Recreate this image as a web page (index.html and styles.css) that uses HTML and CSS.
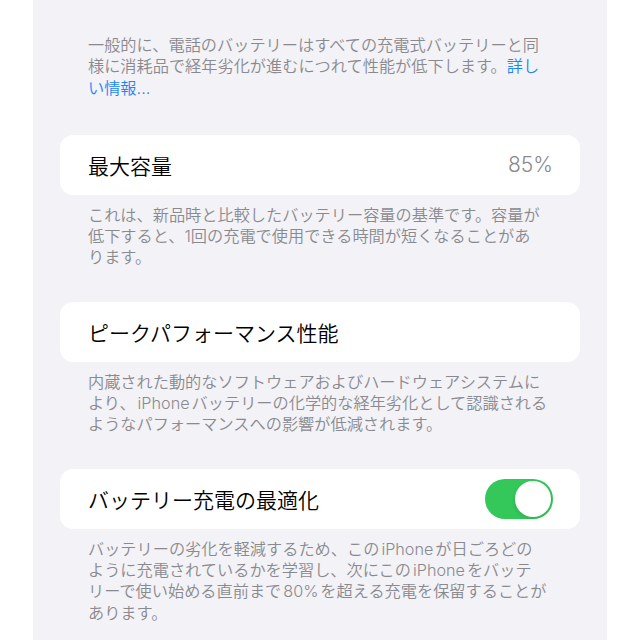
FILE: index.html
```html
<!DOCTYPE html>
<html lang="ja">
<head>
<meta charset="UTF-8" />
<meta name="viewport" content="width=device-width, initial-scale=1" />
<title>バッテリーの状態</title>
<link rel="stylesheet" href="styles.css">
</head>
<body>

<div class="panel">

  <p class="note note-top">
    一般的に、電話のバッテリーはすべての充電式バッテリーと同<br>様に消耗品で経年劣化が進むにつれて性能が低下します。<a href="#">詳し<br>い情報...</a>
  </p>

  <section class="group">
    <div class="card">
      <span class="card-title">最大容量</span>
      <span class="card-value">85%</span>
    </div>
    <p class="note">
      これは、新品時と比較したバッテリー容量の基準です。容量が<br>低下すると、1回の充電で使用できる時間が短くなることがあ<br>ります。
    </p>
  </section>

  <section class="group">
    <div class="card">
      <span class="card-title">ピークパフォーマンス性能</span>
    </div>
    <p class="note">
      内蔵された動的なソフトウェアおよびハードウェアシステムに<br>より、<span class="en">iPhone</span>バッテリーの化学的な経年劣化として認識される<br>ようなパフォーマンスへの影響が低減されます。
    </p>
  </section>

  <section class="group">
    <div class="card">
      <span class="card-title">バッテリー充電の最適化</span>
      <span class="toggle on" role="switch" aria-checked="true"><span class="knob"></span></span>
    </div>
    <p class="note">
      バッテリーの劣化を軽減するため、この<span class="en">iPhone</span>が日ごろどの<br>ように充電されているかを学習し、次にこの<span class="en">iPhone</span>をバッテ<br>リーで使い始める直前まで<span class="en">80%</span>を超える充電を保留することが<br>あります。
    </p>
  </section>

</div>

</body>
</html>
```

FILE: styles.css
```css
/* Reset */
*, *::before, *::after {
  box-sizing: border-box;
  margin: 0; padding: 0;
}
:root {
  --bg: #f2f2f7;
  --card: #ffffff;
  --label: #000000;
  --secondary: #8a8a8e;
  --link: #1c86f2;
  --green: #34c759;
}
html, body {
  height: 100%;
  background: #ffffff;
  font-family: Inter, "Noto Sans CJK JP", sans-serif;
}
.panel {
  width: 574px;
  min-height: 640px;
  margin-left: 33px;
  background: var(--bg);
  padding: 35px 27px 0 27px;
}
.note {
  padding: 0 28px;
  font-size: 16.2px;
  font-weight: 350;
  line-height: 21.3px;
  color: var(--secondary);
  margin-top: 10px;
}
.note-top {
  margin-top: 0;
}
.note a {
  color: var(--link);
  text-decoration: none;
}
.en {
  padding: 0 2px;
}
.group {
  margin-top: 33px;
}
.group:first-of-type {
  margin-top: 36px;
}
.card {
  display: flex;
  align-items: center;
  justify-content: space-between;
  height: 60px;
  padding: 0 27px 0 28px;
  background: var(--card);
  border-radius: 13px;
}
.card-title {
  font-size: 21px;
  font-weight: 350;
  color: var(--label);
}
.card-value {
  font-size: 21px;
  font-weight: 350;
  color: var(--secondary);
}
.toggle {
  display: flex;
  align-items: center;
  justify-content: flex-end;
  width: 68px;
  height: 40px;
  padding: 2px;
  border-radius: 20px;
  background: var(--green);
}
.knob {
  width: 36px;
  height: 36px;
  border-radius: 50%;
  background: #ffffff;
  box-shadow: 0 2px 4px rgba(0, 0, 0, 0.12);
}
```
